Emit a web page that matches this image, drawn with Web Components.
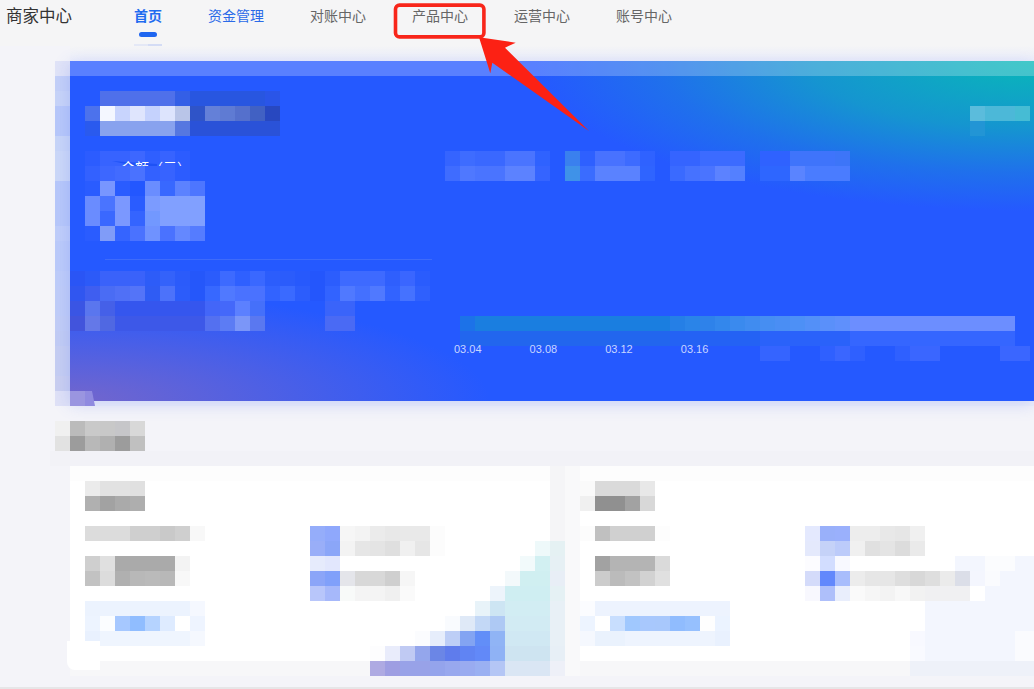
<!DOCTYPE html>
<html lang="zh">
<head>
<meta charset="utf-8">
<title>商家中心</title>
<style>
  html, body { margin: 0; height: 689px; overflow: hidden; background: #f4f4f9; }
  body { font-family: "Noto Sans CJK SC", "Liberation Sans", sans-serif; position: relative; }
</style>
</head>
<body>
<merchant-nav>
  <nav-tab active>首页</nav-tab>
  <nav-tab visited>资金管理</nav-tab>
  <nav-tab>对账中心</nav-tab>
  <nav-tab>产品中心</nav-tab>
  <nav-tab>运营中心</nav-tab>
  <nav-tab>账号中心</nav-tab>
</merchant-nav>
<hero-banner></hero-banner>
<stat-section></stat-section>
<callout-mark></callout-mark>

<script>
// rows split on "/", cells on spaces, "c*3" repeats, "-" leaves a hole
customElements.define('pixel-block', class PixelBlock extends HTMLElement {
  constructor() {
    super();
    this.attachShadow({mode: 'open'})
  }
  connectedCallback() {
    const rows = this.getAttribute('rows').trim().split('/').map(row => {
      const cells = []
      row.trim().split(/\s+/).forEach(tok => {
        const [color, n] = tok.split('*')
        for (let i = 0; i < (n || 1); i++) cells.push(color)
      })
      return cells
    })
    const html = rows.map(cells => `<div class="row">${
      cells.map(c => `<i style="background:${c === '-' ? 'transparent' : c}"></i>`).join('')
    }</div>`).join('')
    this.shadowRoot.innerHTML = `<style>
      :host { display: block; width: max-content; }
      .row { display: flex; height: 15px; }
      i { display: block; width: 15px; height: 15px; flex: none; }
    </style>${html}`
  }
});

customElements.define('merchant-nav', class MerchantNav extends HTMLElement {
  constructor() {
    super();
    this.attachShadow({mode: 'open'})
    this.shadowRoot.innerHTML = `<style>
      :host { display: flex; height: 46px; background: #f5f5f6; padding-left: 6px; }
      .brand { width: 128px; flex: none; font-size: 16.5px; line-height: 20px; padding-top: 5px; color: #333; }
      .tabs { display: flex; gap: 46px; }
    </style>
    <div class="brand">商家中心</div>
    <div class="tabs"><slot></slot></div>`
  }
});

customElements.define('nav-tab', class NavTab extends HTMLElement {
  constructor() {
    super();
    this.attachShadow({mode: 'open'})
    this.shadowRoot.innerHTML = `<style>
      :host { display: flex; flex-direction: column; align-items: center; font-size: 14px; line-height: 20px; padding-top: 5px; color: #666; }
      :host([visited]) { color: #2a6ae8; }
      :host([active]) { color: #1f6bf0; font-weight: 700; }
      .pill, .ghost { display: none; }
      :host([active]) .pill { display: block; width: 18px; height: 5px; margin-top: 7px; border-radius: 3px; background: #1f66f0; }
      :host([active]) .ghost { display: block; width: 28px; height: 2px; margin-top: 7px; background: linear-gradient(90deg, #e4e8f6 50%, #d4dcf5 50%); }
    </style>
    <slot></slot><div class="pill"></div><div class="ghost"></div>`
  }
});

customElements.define('hero-banner', class HeroBanner extends HTMLElement {
  constructor() {
    super();
    this.attachShadow({mode: 'open'})
    this.shadowRoot.innerHTML = `<style>
      :host { display: block; padding: 15px 0 0 55px; background: linear-gradient(#f5f5f6, #eef0fa 15px) 70px 0 no-repeat; }
      .wrap { display: flex; width: 979px; align-items: flex-start; }
      .main {
        position: relative;
        width: 964px; height: 340px; flex: none;
        box-shadow: 0 3px 16px rgba(70, 100, 240, .22);
        background:
          radial-gradient(ellipse 500px 150px at 100% 0, #08b8b8 0, #1595d0 45%, #1f70ec 75%, rgba(37, 89, 255, 0) 100%),
          radial-gradient(ellipse 420px 110px at 0 100%, #7366cc 0, rgba(37, 89, 255, 0) 100%),
          #2559ff;
      }
      .shine { height: 15px; background: rgba(255, 255, 255, .24); }
      .content { display: flex; }
      .left { width: 375px; flex: none; }
      .right { flex: 1; }
      .title { margin: 15px 0 0 15px; }
      .amount { position: relative; margin: 15px 0 0 15px; width: max-content; }
      .wedge {
        position: absolute; left: 27px; top: 10px; width: 45px; height: 6px; background: #1e52f6;
        clip-path: polygon(0 0, 100% 50%, 100% 100%, 60% 100%);
      }
      .caption {
        position: absolute; left: 36px; top: 9px;
        font-size: 14px; line-height: 14px; color: #fff; white-space: nowrap;
      }
      .cover { position: relative; }
      .rule { height: 1px; width: 327px; margin: 18px 0 0 35px; background: #3e6bfa; }
      .figures { margin-top: 11px; }
      .corner { margin: 30px 0 0 525px; }
      .ticker { margin-top: 15px; }
      .chart { display: grid; margin-top: 135px; }
      .chart > * { grid-area: 1 / 1; }
      .bars { margin-left: 15px; }
      .dates { display: flex; padding: 25px 0 0 9px; font-size: 11px; line-height: 16px; color: #c8d6ff; font-family: "Liberation Sans", sans-serif; }
      .dates span { width: 75.6px; }
      .notch {
        position: absolute; left: 0; bottom: -5px; width: 25px; height: 15px;
        background: linear-gradient(90deg, #9a95e0 15px, #8f8ae0 0);
        clip-path: polygon(0 0, 22px 0, 25px 100%, 0 100%);
      }
    </style>
    <div class="wrap">
      <pixel-block rows="#e0e3f7/#c4d0f8/#c8d4f8/#b8c8fa*1/#b8c8fa/#c8d5f8/#ccd8f8/#ccd8f8/#b8c8fa/#b8c8fa/#b8c8fa/#c0cefa/#bccbfa/#bccbfa/#bfcdf9/#c0cdf8/#c0cdf8/#c2cdf6/#c2ccf4/#c6cef2/#c6cef2/#cacff0/#dfe1f6"></pixel-block>
      <div class="main">
        <div class="shine"></div>
        <div class="content">
          <div class="left">
            <pixel-block class="title" rows="- #4f70ea*5 #345fe6 #2856e0*5 #2a55e8
              /#4c72ec #f4f7ff #c8d4fd #dfe5fd #c5d2fd #dde4fd #b9c5e8 #2f54c8 #6480d8 #5f7bd3 #5570cc #4161c3 #2848c0
              /#2a5aee #88a2ee*5 #5677e0 #2a52d8*6"></pixel-block>
            <div class="amount">
              <pixel-block rows="#2c5cff #3763ff*2 #3d67ff #2f5fff #3763ff #2c5cff -"></pixel-block>
              <div class="wedge"></div>
              <div class="caption">余额（元）</div>
              <pixel-block class="cover" rows="#3361ff #3d67ff #426bff #4a72ff #3361ff #3763ff #2c5cff -
                /#2a5cff #7896ff #2a5cff #2357ff #6a8dff #3868ff #5c82ff #4d76ff
                /#6a8cff #4a74ff #7b98ff #2a5cff #7b9bff #81a0ff*3
                /#6a8cff #3a68ff #7b98ff #3464ff #7298ff #81a0ff*3
                /#2a5cff #809cf8 #3564ff #4a72ff #6f92ff #4a72ff #6488ff #557cff"></pixel-block>
            </div>
            <div class="rule"></div>
            <pixel-block class="figures" rows="#2a55f5 #2c5af8 #3a62fa*3 #2d5cf8 #3462fa #2b5bfa #2557fa #2b5cfc #3d6aff #2f60ff #3a68ff #2c5dfc #2b5cfb #2759fc #2456fc #2c5dfd #3e6aff*3 #2f5ffd #3a66ff #2a5cfd
              /#3056f0 #3f5ef0 #4a6cf4 #5070f6 #5474f8 #2f5cf4 #4c72fa #2c5cfa #2557fa #3768ff #5079ff #4a72ff*2 #3263ff #3a6aff #2c5dfc #2456fc #3263ff #5079ff #4470ff #5079ff #3263ff #4572ff #2f60fd
              /#3a55e4 #5a76ee #4560e8 #3556ee*6 #4366f8 #4468fa #5c80ff #4570fa -*4 #3a64fa*2
              /#4254dc #6478e8 #5068e2 #3d58e8*6 #5470f0 #5c7cf4 #7b96f8 #5a78f0 -*4 #4a6af4*2"></pixel-block>
          </div>
          <div class="right">
            <pixel-block class="corner" rows="#5bbcdc #4cb8d8*2 #46bcd4/#2295d5"></pixel-block>
            <pixel-block class="ticker" rows="#3564ff #3e6cff #3a68ff*2 #4a74ff*2 #2f62ff - #3a80ee #2e60ff #4872ff*2 #3d6bff #2f62ff - #3564ff*2 #3c6bff*3 - #2f62ff*2 #3f74fb*3 #3d75f8
              /#3f6cff #4f78ff #4a74ff*2 #5c82ff*2 #3564ff - #3f92e8 #3a6cff #5a82ff*3 #2f64ff - #3a6aff #4672ff #4a74ff #5c82ff #5480ff - #2e66ff*2 #5a84ff #4a7cff*3"></pixel-block>
            <div class="chart">
              <pixel-block class="bars" rows="#1c72e8 #1a7ee0*13 #257fe6 #2a84e8 #2e82ea #3387ec #3a8aee #408cf0 #468ef2 #4a8ef4 #4d90f6 #5390f8 #5a90fa #5f90fc #6c8eff*11
                /#2266ee*14 #2462f4*6 #2a62fa*6 #3566ff*11
                /-*20 #3564ff*2 -*2 #2f60ff #3a66ff #2f60ff -*2 #2f60ff #3a66ff*2 -*4 #3a66ff*2"></pixel-block>
              <div class="dates"><span>03.04</span><span>03.08</span><span>03.12</span><span>03.16</span></div>
            </div>
          </div>
        </div>
        <div class="notch"></div>
      </div>
    </div>`
  }
});

customElements.define('stat-card', class StatCard extends HTMLElement {
  constructor() {
    super();
    this.attachShadow({mode: 'open'})
    this.shadowRoot.innerHTML = `<style>
      :host {
        display: block; box-sizing: border-box; height: 210px; padding-top: 15px;
        background: linear-gradient(#fdfdfd 15px, #fff 15px, #fff 195px, #f7f7f9 195px);
      }
      .head { margin-bottom: 15px; }
      .body { display: flex; }
      .left { width: 225px; flex: none; display: flex; flex-direction: column; gap: 15px; }
    </style>
    <div class="head"><slot name="title"></slot></div>
    <div class="body">
      <div class="left"><slot name="left"></slot></div>
      <div><slot name="right"></slot></div>
    </div>`
  }
});

customElements.define('stat-section', class StatSection extends HTMLElement {
  constructor() {
    super();
    this.attachShadow({mode: 'open'})
    this.shadowRoot.innerHTML = `<style>
      :host { display: block; padding: 15px 0 0 55px; }
      .band { height: 15px; margin-left: -5px; background: #f2f2f7; }
      .cards { position: relative; display: flex; margin-left: 15px; width: 964px; }
      .first { width: 480px; padding-left: 15px; box-sizing: border-box; flex: none; }
      .second { flex: 1; }
      .seam { width: 30px; flex: none; background: linear-gradient(90deg, #f5f5f7 15px, #f9f9fa 15px); }
      .glow, .wash, .tuck { position: absolute; }
      .glow { left: 300px; top: 75px; }
      .wash { left: 840px; top: 90px; }
      .tuck { left: -3px; top: 175px; width: 33px; height: 29px; background: #fff; border-bottom-left-radius: 8px; }
      footer { height: 2px; margin: 11px 0 0 -55px; background: #e6e6e8; }
    </style>
    <pixel-block rows="#f0f0f0 #bbb #c9c9c9 #c8c8c8 #c6c6c9 #d8d8d8/#e2e2e2 #9c9c9c #b8b8b8 #b0b0b0 #9c9c9c #c0c0c0"></pixel-block>
    <div class="band"></div>
    <div class="cards">
      <stat-card class="first">
        <pixel-block slot="title" rows="#ebebeb #e2e2e2*2 #e0e0e0/#b0b0b0 #a2a2a2 #aaa #aeaeae"></pixel-block>
        <pixel-block slot="left" rows="#dcdcdc*3 #cfcfcf*2 #c9c9c9 #cfcfcf #f8f8f8"></pixel-block>
        <pixel-block slot="left" rows="#cfcfcf #e0e0e0 #aaa*4 #f3f3f3/#c2c2c2 #dcdcdc #b0b0b0 #b8b8b8 #bababa #b8b8b8 #f8f8f8"></pixel-block>
        <pixel-block slot="left" rows="#ecf3fe*7 #f5f8ff/#edf4ff #fbfdff #a6c8ff #90bdff #b5d3ff #deebff #fff #eef4ff/#e9f1fe #eff5fe*6 #f5f8fe"></pixel-block>
        <pixel-block slot="right" rows="#95adfa #8fa8fc #f6f6f6 #f3f3f3 #ebebeb #e8e8e8 #e9e9e9*2 #fcfcfc
          /#99aef8 #8ba6f8 #f3f3f3 #e6e6e6 #e4e4e4 #dfdfdf #f0f0f0 #e6e6e6 #fcfcfc
          /#e6ebfc #e2e7fd
          /#8ba5f8 #80a0fa #e4e5ea #d8d8d8*2 #cfcfcf #f6f6f6
          /#b8c6fa #a6b8fa #f8faf9 #f4f4f4*2 #f0f0f0 #fafafa"></pixel-block>
      </stat-card>
      <div class="seam"></div>
      <stat-card class="second">
        <pixel-block slot="title" rows="#fafafa #dadada*3 #e8e8e8/#f0f0f0 #909090*2 #a2a2a2 #d8d8d8"></pixel-block>
        <pixel-block slot="left" rows="#fcfcfc #c0c0c0 #d0d0d0*3 #fdfdfd"></pixel-block>
        <pixel-block slot="left" rows="- #a2a2a2 #b4b4b4*3 #dadada/- #ccc #bbb #c2c2c2 #d2d2d2 #e0e0e0"></pixel-block>
        <pixel-block slot="left" rows="#fbfcff #edf3fe*9/#edf4ff #fff #c8defe #a0c8fe #a8c8fd #a8c8fc #90bcfe #96c0fe #fefefe #ebf3ff/#f5f8fe #eaf2fd*2 #eef4fe*6 #e9f1fe"></pixel-block>
        <pixel-block slot="right" rows="#e4e9fe #99b0fa #9ab0fc #ededed*2 #e8e8e8 #e6e6e6 #f0f0f0
          /#e4e9fc #c5d2f8 #bccbfa #f0f0f0 #e0e0e0 #e4e4e4 #dcdcdc #eaeaea
          /#fcfcff #d2ddff #f8f9ff
          /#d4dbfa #6288fc #a8bdfc #ececec #e6e6e6*2 #dedede #d8d8d8 #dedede #ebebeb #dbdee8
          /#f8f8fe #aebffa #e9eefc #fafafa #f6f6f6 #f3f3f3 #f8f8f8 #f2f2f2 #f0f0f2*3"></pixel-block>
      </stat-card>
      <div class="tuck"></div>
      <pixel-block class="glow" rows="-*11 #eef9fa #e5f1f3
        /-*10 #f2fafb #d2f0f2 #e6f0f4
        /-*9 #f3f9fb #d0eff1*2 #e8eef6
        /-*8 #edf4fb #cfeef2*3 #e5f1f4
        /-*7 #e8f3f9 #cde5f3 #d2edf3*3 #e8f0f6
        /-*5 #f9fbfe #dfe9f7 #c3d8f6 #aec9f4 #d2ebf3*3 #e8f0f6
        /-*3 #fbfcfe #e6edfb #bdcef6 #83a4f2 #628ef8 #90b4f5 #d0e8f3*3 #e8f0f6
        /#fdfdfe #e9ecfb #c0caf3 #94a6ec #6b86e6 #5f7cec #6084f3 #6289f8 #8fb2f5 #cee4f1*3 #e7eff6
        /#aeaae2 #9e9ee2 #98a2e8*2 #94a4ec #98a8ee #99abf0 #9ab0f2 #b4c6f5 #dae6f4*3 #eef0f8"></pixel-block>
      <pixel-block class="wash" rows="-*3 #f3f6fe*2 #fbfcfe*2 #f3f6fe*2
        /-*4 #f4f6fe #fafbfe #f3f6fe*3
        /-*5 #f3f6fe*4
        /- #f3f6fe*8
        /- #f3f6fe*8
        /#f8f9ff #f3f6fe*6 #fafbfe*2
        /#f9faff #f3f6fe*6 #fafbfe*2
        /#eef1f9*9"></pixel-block>
    </div>
    <footer></footer>`
  }
});

// the red annotation drawn over the screenshot
customElements.define('callout-mark', class CalloutMark extends HTMLElement {
  constructor() {
    super();
    this.attachShadow({mode: 'open'})
    this.shadowRoot.innerHTML = `<style>
      :host { position: absolute; left: 0; top: 0; display: block; pointer-events: none; }
      svg { display: block; }
    </style>
    <svg width="1034" height="689" viewBox="0 0 1034 689">
      <rect x="395.5" y="5.1" width="88.4" height="31.8" rx="4" fill="none" stroke="#f8261a" stroke-width="3.6"/>
      <path d="M479 37.3 515.7 42.7 505 47.7 589 131 492.3 62.7 490.3 73.3Z" fill="#fc2114"/>
    </svg>`
  }
});
</script>
</body>
</html>
